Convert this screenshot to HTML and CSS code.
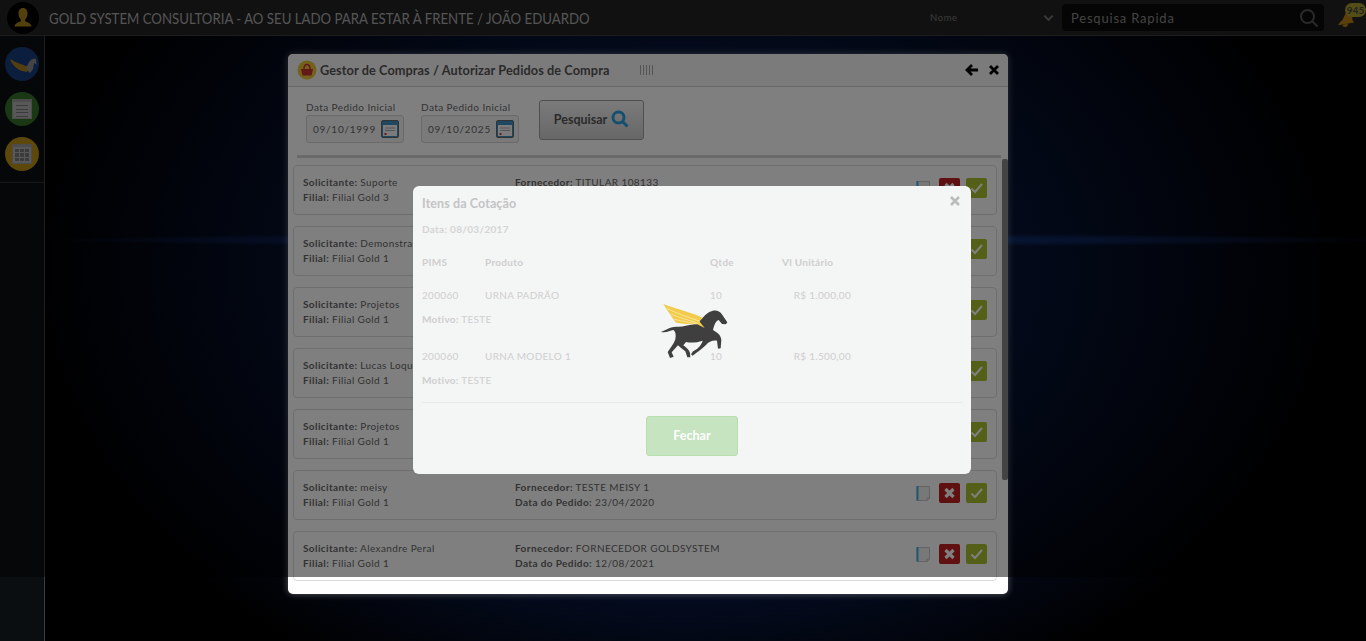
FILE: index.html
```html
<!DOCTYPE html>
<html lang="pt-BR">
<head>
<meta charset="utf-8">
<title>Gold System</title>
<link rel="stylesheet" href="styles.css">
</head>
<body>
<svg class="defs" width="0" height="0" aria-hidden="true">
  <symbol id="pegasus" viewBox="0 0 420 240">
    <path class="peg-body" d="M122 125C135 124 145 110 170 110C186 112 200 106 222 103C240 98 250 76 268 66C282 58 298 60 305 72L322 97L318 103L306 102L296 90C287 94 283 103 279 120C292 128 303 135 304 150L302 175L294 176L291 152C278 150 266 155 258 165C246 176 232 187 218 197L213 193L219 184C232 178 244 166 248 152C232 157 214 160 198 156L190 166C198 172 206 178 210 188L211 202L202 202L196 184C188 178 180 172 174 166L155 187L161 200L150 204L143 186C152 172 162 162 166 148C168 136 168 126 160 120C150 122 136 130 122 125Z"/>
    <path class="peg-wing" d="M130 42C170 58 225 70 248 84L238 94L254 114L230 102C205 104 186 100 168 98C155 80 142 62 130 42Z"/>
    <path class="peg-feather" d="M140 55C170 70 205 82 240 94M152 72C180 84 205 90 235 100M163 88C190 94 210 98 230 102"/>
  </symbol>
  <symbol id="note" viewBox="0 0 16 16">
    <path d="M2 1.500h12.500v12l-2.500 2H2z" fill="#f1f1f1" stroke="#bbb" stroke-width=".8"/>
    <path d="M2.500 1v14.500" stroke="#3fb3e0" stroke-width="2"/>
    <path d="M12 15.500v-2.500h2.500" fill="none" stroke="#bbb" stroke-width=".8"/>
  </symbol>
  <symbol id="calendar" viewBox="0 0 18 18">
    <rect x="0.500" y="0.500" width="17" height="17" rx="1.500" class="cal-frame"/>
    <rect x="2" y="5" width="14" height="11" class="cal-page"/>
    <path class="cal-line" d="M4 8h10M4 10.500h10"/>
    <rect x="3.500" y="13" width="2" height="2" class="cal-dot"/>
  </symbol>
  <symbol id="i-no" viewBox="0 0 21 20"><path d="m6.500 6 8 8M14.500 6l-8 8" fill="none" stroke="#fff" stroke-width="3.200"/></symbol>
  <symbol id="i-yes" viewBox="0 0 21 20"><path d="m5.500 10.500 3.500 3.500 7-8" fill="none" stroke="#fff" stroke-width="2"/></symbol>
</svg>
<div class="app">
  <header class="topbar">
    <div class="avatar">
      <svg viewBox="0 0 32 32" width="32" height="32"><path d="M16 6c3 0 4.500 2.300 4.500 5.500 0 2.800-1.200 5-2.300 6v1.700c2.300 1.300 5.800 1.700 6.300 5.300h-17c.5-3.600 4-4 6.300-5.300v-1.700c-1.100-1-2.300-3.200-2.300-6C11.500 8.300 13 6 16 6z"/></svg>
    </div>
    <h1 class="app-title">GOLD SYSTEM CONSULTORIA - AO SEU LADO PARA ESTAR À FRENTE / JOÃO EDUARDO</h1>
    <div class="search-type">
      <span>Nome</span>
      <svg viewBox="0 0 12 8" width="11" height="8"><path d="M1.500 1.500 6 6l4.500-4.500" /></svg>
    </div>
    <div class="search">
      <span>Pesquisa Rapida</span>
      <svg viewBox="0 0 20 20" width="20" height="20"><circle cx="8.500" cy="8.500" r="6.500"/><path d="m13.500 13.500 5 5"/></svg>
    </div>
    <div class="bell">
      <svg viewBox="0 0 20 22" width="18" height="20"><path d="M12 3C15 2 17 4 17 7L17 13 19 16 1 19 4 15C8 13 8 6 12 3Z"/><path d="M6 18.500a3 3 0 0 0 6-1z"/></svg>
      <span class="bell-count">945</span>
    </div>
  </header>

  <div class="main">
    <nav class="sidebar">
      <div class="side-group">
        <div class="side-btn side-blue">
          <svg viewBox="0 0 34 34" width="34" height="34"><path class="side-wing" d="M5 12C12 16 18 18 24 20L22 25 17 24C12 22 7 18 5 12Z"/><path class="side-horse" d="M21 21 24 15C26 12 29 11 31 12L31.500 17.500 29 16 28 22 25 26 23 24Z"/></svg>
        </div>
        <div class="side-btn side-green">
          <div class="side-sheet side-list"><i></i><i></i><i></i><i></i></div>
        </div>
        <div class="side-btn side-gold">
          <div class="side-sheet side-grid"><i></i><i></i><i></i><i></i><i></i><i></i><i></i><i></i><i></i></div>
        </div>
      </div>
    </nav>
    <div class="desktop"></div>
  </div>

  <section class="window">
    <div class="win-head">
      <span class="win-logo">
        <svg viewBox="0 0 20 20" width="20" height="20"><circle cx="10" cy="10" r="9.500" class="logo-disc"/><path class="logo-basket" d="M4 9h12l-1.500 6.500h-9z"/><path class="logo-handle" d="M7 9c0-6 6-6 6 0"/></svg>
      </span>
      <span class="win-title">Gestor de Compras / Autorizar Pedidos de Compra</span>
      <span class="barcode"></span>
      <span class="win-actions">
        <svg viewBox="0 0 14 14" width="14" height="14"><path d="M7 2 2 7l5 5M2.500 7H13"/></svg>
        <svg viewBox="0 0 14 14" width="14" height="14"><path d="m3 3 8 8M11 3l-8 8"/></svg>
      </span>
    </div>

    <div class="filters">
      <label class="field">
        <span class="field-label">Data Pedido Inicial</span>
        <span class="field-box">09/10/1999
          <svg class="cal" width="18" height="18"><use href="#calendar"/></svg>
        </span>
      </label>
      <label class="field">
        <span class="field-label">Data Pedido Inicial</span>
        <span class="field-box">09/10/2025
          <svg class="cal" width="18" height="18"><use href="#calendar"/></svg>
        </span>
      </label>
      <button class="search-btn" type="button">Pesquisar
        <svg viewBox="0 0 18 18" width="18" height="18"><circle cx="7.500" cy="7.500" r="5.500"/><path d="m12 12 4.500 4.500"/></svg>
      </button>
    </div>
    <div class="rule"></div>

    <div class="list-wrap">
      <div class="list">
        <article class="order">
          <div class="col-a"><p><b>Solicitante:</b> Suporte</p><p><b>Filial:</b> Filial Gold 3</p></div>
          <div class="col-b"><p><b>Fornecedor:</b> TITULAR 108133</p><p>&nbsp;</p></div>
          <div class="order-actions"><svg class="note" width="16" height="16"><use href="#note"/></svg><svg class="act act-no" width="21" height="20"><use href="#i-no"/></svg><svg class="act act-yes" width="21" height="20"><use href="#i-yes"/></svg></div>
        </article>
        <article class="order">
          <div class="col-a"><p><b>Solicitante:</b> Demonstração</p><p><b>Filial:</b> Filial Gold 1</p></div>
          <div class="col-b"></div>
          <div class="order-actions"><svg class="note" width="16" height="16"><use href="#note"/></svg><svg class="act act-no" width="21" height="20"><use href="#i-no"/></svg><svg class="act act-yes" width="21" height="20"><use href="#i-yes"/></svg></div>
        </article>
        <article class="order">
          <div class="col-a"><p><b>Solicitante:</b> Projetos</p><p><b>Filial:</b> Filial Gold 1</p></div>
          <div class="col-b"></div>
          <div class="order-actions"><svg class="note" width="16" height="16"><use href="#note"/></svg><svg class="act act-no" width="21" height="20"><use href="#i-no"/></svg><svg class="act act-yes" width="21" height="20"><use href="#i-yes"/></svg></div>
        </article>
        <article class="order">
          <div class="col-a"><p><b>Solicitante:</b> Lucas Loqueti</p><p><b>Filial:</b> Filial Gold 1</p></div>
          <div class="col-b"></div>
          <div class="order-actions"><svg class="note" width="16" height="16"><use href="#note"/></svg><svg class="act act-no" width="21" height="20"><use href="#i-no"/></svg><svg class="act act-yes" width="21" height="20"><use href="#i-yes"/></svg></div>
        </article>
        <article class="order">
          <div class="col-a"><p><b>Solicitante:</b> Projetos</p><p><b>Filial:</b> Filial Gold 1</p></div>
          <div class="col-b"></div>
          <div class="order-actions"><svg class="note" width="16" height="16"><use href="#note"/></svg><svg class="act act-no" width="21" height="20"><use href="#i-no"/></svg><svg class="act act-yes" width="21" height="20"><use href="#i-yes"/></svg></div>
        </article>
        <article class="order">
          <div class="col-a"><p><b>Solicitante:</b> meisy</p><p><b>Filial:</b> Filial Gold 1</p></div>
          <div class="col-b"><p><b>Fornecedor:</b> TESTE MEISY 1</p><p><b>Data do Pedido:</b> 23/04/2020</p></div>
          <div class="order-actions"><svg class="note" width="16" height="16"><use href="#note"/></svg><svg class="act act-no" width="21" height="20"><use href="#i-no"/></svg><svg class="act act-yes" width="21" height="20"><use href="#i-yes"/></svg></div>
        </article>
        <article class="order">
          <div class="col-a"><p><b>Solicitante:</b> Alexandre Peral</p><p><b>Filial:</b> Filial Gold 1</p></div>
          <div class="col-b"><p><b>Fornecedor:</b> FORNECEDOR GOLDSYSTEM</p><p><b>Data do Pedido:</b> 12/08/2021</p></div>
          <div class="order-actions"><svg class="note" width="16" height="16"><use href="#note"/></svg><svg class="act act-no" width="21" height="20"><use href="#i-no"/></svg><svg class="act act-yes" width="21" height="20"><use href="#i-yes"/></svg></div>
        </article>
      </div>
      <div class="scroll-track"><div class="scroll-thumb"></div></div>
    </div>
  </section>

  <div class="overlay"></div>

  <section class="modal">
    <svg class="modal-close" viewBox="0 0 12 12" width="12" height="12"><path d="m2 2 8 8M10 2l-8 8"/></svg>
    <h2 class="modal-title">Itens da Cotação</h2>
    <p class="modal-date">Data: 08/03/2017</p>
    <div class="items items-head"><span>PIMS</span><span>Produto</span><span>Qtde</span><span>Vl Unitário</span></div>
    <div class="items"><span>200060</span><span>URNA PADRÃO</span><span>10</span><span class="price">R$ 1.000,00</span></div>
    <p class="motive"><b>Motivo:</b> TESTE</p>
    <div class="items"><span>200060</span><span>URNA MODELO 1</span><span>10</span><span class="price">R$ 1.500,00</span></div>
    <p class="motive"><b>Motivo:</b> TESTE</p>
    <div class="modal-foot"><button class="close-btn" type="button">Fechar</button></div>
  </section>

  <svg class="loader" width="140" height="80"><use href="#pegasus"/></svg>
</div>
</body>
</html>
```
FILE: styles.css
```css
* { box-sizing: border-box; }
html, body { margin: 0; height: 100%; }
body { background: #000; font-family: Lato, "Liberation Sans", sans-serif; overflow: hidden; }
.defs { position: absolute; }
p, h1, h2 { margin: 0; }

.app { position: relative; width: 1366px; height: 641px; display: flex; flex-direction: column; overflow: hidden; }

/* top bar */
.topbar { height: 36px; flex: none; display: flex; align-items: center; background: #222324; border-bottom: 1px solid #3a3a3a; }
.avatar { width: 32px; height: 32px; margin-left: 7px; border-radius: 50%; background: #000; flex: none; }
.avatar path { fill: #a88018; }
.app-title { margin-left: 10px; width: 881px; flex: none; font-size: 15.500px; font-weight: 400; color: #aaa; white-space: nowrap; transform: scaleX(.853); transform-origin: left center; }
.search-type { width: 132px; flex: none; display: flex; justify-content: space-between; align-items: center; font-size: 9.500px; letter-spacing: .6px; color: #777; padding-right: 8px; }
.search-type svg { fill: none; stroke: #777; stroke-width: 2; }
.search { width: 262px; height: 27px; flex: none; display: flex; align-items: center; justify-content: space-between; padding: 0 5px 0 9px; background: #0a0a0a; border-radius: 4px; font-size: 13px; letter-spacing: .8px; color: #888; }
.search svg { fill: none; stroke: #555; stroke-width: 2; }
.bell { position: relative; width: 20px; height: 22px; margin-left: 13px; top: 1px; }
.bell svg { fill: #b88014; }
.bell-count { position: absolute; left: 8px; top: -5px; min-width: 21px; height: 14px; border-radius: 7px; background: #a89c2c; color: #444; font-size: 10px; font-weight: 700; line-height: 14px; text-align: center; }

/* sidebar */
.main { flex: 1; display: flex; min-height: 0; }
.sidebar { width: 45px; flex: none; background: #0b0e10; border-right: 1px solid #3c3c3c; }
.side-group { padding: 11px 0 11px 5px; display: flex; flex-direction: column; gap: 11px; border-bottom: 1px solid #333; height: 147px; }
.side-btn { width: 34px; height: 34px; border-radius: 50%; display: flex; align-items: center; justify-content: center; flex: none; }
.side-blue { background: #183c7c; }
.side-green { background: #347028; }
.side-gold { background: #b89016; }
.side-wing { fill: #a87c1c; }
.side-horse { fill: #888; }
.side-sheet { width: 20px; height: 20px; background: #b0b0b0; border: 1px solid #999; border-top-width: 3px; }
.side-list { display: flex; flex-direction: column; gap: 2px; padding: 2px 3px; }
.side-list i { display: block; height: 1px; margin-top: 1px; background: #777; }
.side-grid { display: grid; grid-template-columns: repeat(3, 1fr); gap: 1px; padding: 2px; }
.side-grid i { background: #777; }
.desktop { flex: 1; background-color: #000;
  background-image:
    radial-gradient(ellipse 680px 7px at 680px 204px, #143a8c 0%, rgba(20,58,140,0) 100%),
    radial-gradient(ellipse 660px 460px at 640px 235px, #0c2660 0%, #050f2a 60%, #000 100%); }

/* window */
.window { position: absolute; left: 288px; top: 54px; width: 720px; height: 540px; background: #fff; border-radius: 5px; box-shadow: 0 0 7px rgba(255,255,255,.35); overflow: hidden; display: flex; flex-direction: column; }
.win-head { height: 33px; flex: none; display: flex; align-items: center; padding: 0 7px 0 9px; background: #f6f6f6; border-bottom: 1px solid #ccc; }
.win-logo { display: flex; width: 23px; flex: none; }
.logo-disc { fill: #e8c238; }
.logo-basket { fill: #c83030; }
.logo-handle { fill: none; stroke: #c33; stroke-width: 1.500; }
.win-title { font-size: 12.700px; font-weight: 700; color: #555; letter-spacing: .1px; width: 320px; flex: none; white-space: nowrap; }
.barcode { width: 15px; height: 10px; flex: none; background: repeating-linear-gradient(90deg, #aaa 0 1px, transparent 1px 3px); }
.win-actions { margin-left: auto; display: flex; gap: 8px; }
.win-actions svg { fill: none; stroke: #000; stroke-width: 2.800; }

.filters { height: 68px; flex: none; display: flex; align-items: flex-start; padding: 14px 0 0 18px; }
.field { display: flex; flex-direction: column; width: 98px; margin-right: 17px; }
.field + .field { margin-right: 20px; }
.field-label { font-size: 10px; letter-spacing: .42px; line-height: 13px; color: #666; white-space: nowrap; }
.field-box { height: 28px; margin-top: 1px; display: flex; align-items: center; justify-content: space-between; padding: 0 4px 0 6px; border: 1px solid #d4d4d4; border-radius: 3px; background: #f4f4f4; font-size: 10px; letter-spacing: .75px; color: #666; }
.cal-frame { fill: #3d8fc4; stroke: #666; }
.cal-page { fill: #f6f6f6; }
.cal-line { stroke: #aaa; stroke-width: 1; }
.cal-dot { fill: #d33; }
.search-btn { width: 105px; height: 40px; margin-top: -1px; display: flex; align-items: center; justify-content: center; gap: 4px; padding: 0 0 2px; border: 1px solid #a0a0a0; border-radius: 3px; background: linear-gradient(#f6f6f6, #cfcfcf); font-family: inherit; font-size: 12.500px; font-weight: 700; color: #555; }
.search-btn svg { fill: none; stroke: #2a9fe0; stroke-width: 3; }
.rule { height: 3px; margin: 0 7px 0 9px; flex: none; background: #d4d4d4; }

.list-wrap { flex: 1; min-height: 0; display: flex; }
.list { width: 714px; flex: none; padding: 7px 5px 0; display: flex; flex-direction: column; gap: 11px; }
.order { height: 50px; flex: none; display: flex; align-items: center; padding: 0 9px; border: 1px solid #ddd; border-radius: 4px; background: #fff; }
.order p { font-size: 10px; line-height: 15px; letter-spacing: .4px; color: #666; white-space: nowrap; }
.order b { font-weight: 700; }
.col-a { width: 212px; flex: none; }
.col-b { flex: 1; }
.order-actions { display: flex; align-items: center; gap: 6px; margin-top: -4px; }
.note { margin-right: 2px; }
.act { border-radius: 2px; }
.act-no { background: #c02020; }
.act-yes { background: #a8c030; }
.scroll-track { width: 6px; flex: none; padding-top: 1px; }
.scroll-thumb { width: 6px; height: 321px; border-radius: 2px; background: #888; }

/* overlay + modal */
.overlay { position: absolute; left: 0; top: 0; width: 100%; height: 577px; background: rgba(0,0,0,.5); }
.modal { position: absolute; left: 413px; top: 186px; width: 558px; height: 288px; padding: 10px 9px 0; border-radius: 6px; background: #f4f5f5; color: #cfcfcf; font-size: 10px; letter-spacing: .3px; }
.modal-close { position: absolute; right: 10px; top: 9px; fill: none; stroke: #bbb; stroke-width: 2.600; }
.modal-title { font-size: 12.500px; font-weight: 700; line-height: 16px; color: #c4c4c4; letter-spacing: .1px; }
.modal-date { margin-top: 10px; line-height: 15px; font-weight: 700; color: #d4d4d4; }
.items { display: grid; grid-template-columns: 63px 225px 72px 69px; line-height: 15px; margin-top: 18px; }
.items-head { font-weight: 700; }
.price { text-align: right; }
.motive { margin-top: 9px; line-height: 15px; }
.motive b { font-weight: 700; }
.motive + .items { margin-top: 22px; }
.modal-foot { margin-top: 14px; padding-top: 13px; border-top: 1px solid #e9eaea; display: flex; justify-content: center; }
.close-btn { width: 92px; height: 40px; padding: 0 0 2px; border: 1px solid #b8e0ae; border-radius: 3px; background: #c5e4bf; color: #fff; font-family: inherit; font-size: 12.500px; font-weight: 700; }
.loader { position: absolute; left: 620px; top: 290px; }
.peg-body { fill: #3f3f3f; }
.peg-wing { fill: #f2cb4b; }
.peg-feather { fill: none; stroke: #fae59a; stroke-width: 3; }
```
